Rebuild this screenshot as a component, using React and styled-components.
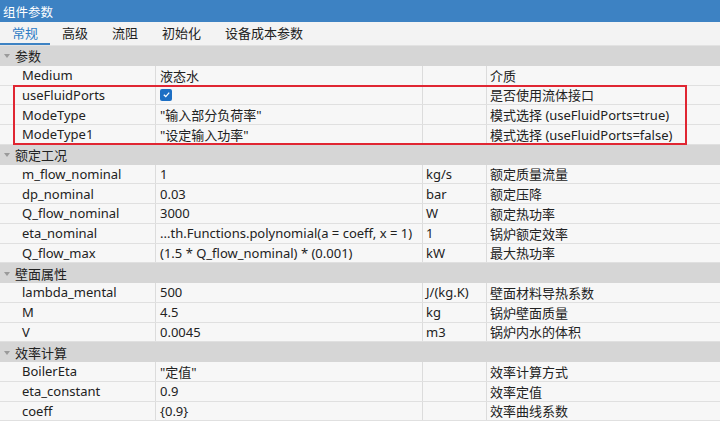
import React from 'react'
import styled, { createGlobalStyle } from 'styled-components'

const GlobalStyle = createGlobalStyle`
  body {
    margin: 0px;
    background: #f7f7f7;
  }
`

const font = `"Noto Sans", "Noto Sans CJK SC", sans-serif`

const Panel = styled.div`
  width: 720px;
  height: 421px;
  overflow: hidden;
  background: #f7f7f7;
  font-family: ${font};
  font-size: 13px;
  color: #222;
`

const TitleBar = styled.div`
  height: 22px;
  background: #3d82c3;
  color: #fff;
  display: flex;
  align-items: center;
  padding-left: 3px;
  font-size: 12.5px;
`

const TabBar = styled.div`
  height: 23px;
  background: #f3f3f3;
  display: flex;
  align-items: stretch;
  border-bottom: 1px solid #e2e2e2;
`

const Tab = styled.div`
  padding: 0 12px;
  display: flex;
  align-items: center;
  font-size: 13px;
  color: ${p => (p.$active ? '#2d7bc5' : '#222')};
  border-bottom: 2px solid ${p => (p.$active ? '#3d82c3' : 'transparent')};
  box-sizing: border-box;
  ${p => p.$active && 'width: 50px; justify-content: center;'}
`

const Row = styled.div`
  display: grid;
  grid-template-columns: 156px 267px 64px 1fr;
  height: 19.75px;
  box-sizing: border-box;
  border-bottom: 1px solid #e0e0e0;
  background: #f7f7f7;
`

const Cell = styled.div`
  display: flex;
  align-items: center;
  padding-left: ${p => p.$pad || 3}px;
  white-space: nowrap;
  overflow: hidden;
  border-right: ${p => (p.$last ? 'none' : '1px solid #dcdcdc')};
`

const GroupHeader = styled.div`
  height: 19.75px;
  box-sizing: border-box;
  background: #d6d6d6;
  display: flex;
  align-items: center;
  padding-left: 4px;
  gap: 5px;
`

const Caret = styled.span`
  width: 0;
  height: 0;
  border-left: 3px solid transparent;
  border-right: 3px solid transparent;
  border-top: 4px solid #9a9a9a;
  margin-top: 1px;
`

const Highlight = styled.div`
  position: relative;
`

const RedBox = styled.div`
  position: absolute;
  left: 13px;
  width: 674px;
  top: -1px;
  bottom: 0px;
  border: 2px solid #e02632;
  box-sizing: border-box;
  pointer-events: none;
`

const Check = styled.span`
  width: 12px;
  height: 12px;
  border-radius: 2px;
  background: #1d6fc4;
  display: inline-flex;
  align-items: center;
  justify-content: center;
`

const groups = [
  {
    title: '参数',
    rows: [
      ['Medium', '液态水', '', '介质'],
    ],
    marked: [
      ['useFluidPorts', 'check', '', '是否使用流体接口'],
      ['ModeType', '"输入部分负荷率"', '', '模式选择 (useFluidPorts=true)'],
      ['ModeType1', '"设定输入功率"', '', '模式选择 (useFluidPorts=false)'],
    ],
  },
  {
    title: '额定工况',
    rows: [
      ['m_flow_nominal', '1', 'kg/s', '额定质量流量'],
      ['dp_nominal', '0.03', 'bar', '额定压降'],
      ['Q_flow_nominal', '3000', 'W', '额定热功率'],
      ['eta_nominal', '...th.Functions.polynomial(a = coeff, x = 1)', '1', '锅炉额定效率'],
      ['Q_flow_max', '(1.5 * Q_flow_nominal) * (0.001)', 'kW', '最大热功率'],
    ],
  },
  {
    title: '壁面属性',
    rows: [
      ['lambda_mental', '500', 'J/(kg.K)', '壁面材料导热系数'],
      ['M', '4.5', 'kg', '锅炉壁面质量'],
      ['V', '0.0045', 'm3', '锅炉内水的体积'],
    ],
  },
  {
    title: '效率计算',
    rows: [
      ['BoilerEta', '"定值"', '', '效率计算方式'],
      ['eta_constant', '0.9', '', '效率定值'],
      ['coeff', '{0.9}', '', '效率曲线系数'],
    ],
  },
]

function ParamRow({ r }) {
  return (
    <Row>
      <Cell $pad={22}>{r[0]}</Cell>
      <Cell $pad={4}>
        {r[1] === 'check' ? (
          <Check>
            <svg width="9" height="9" viewBox="0 0 10 10">
              <path d="M2 5.2 L4.2 7.3 L8 3" stroke="#fff" strokeWidth="1.4" fill="none" />
            </svg>
          </Check>
        ) : (
          r[1]
        )}
      </Cell>
      <Cell $pad={3}>{r[2]}</Cell>
      <Cell $pad={3} $last>{r[3]}</Cell>
    </Row>
  )
}

export default function App() {
  const tabs = ['常规', '高级', '流阻', '初始化', '设备成本参数']
  return (
    <>
      <GlobalStyle />
      <Panel>
        <TitleBar>组件参数</TitleBar>
        <TabBar>
          {tabs.map((t, i) => (
            <Tab key={t} $active={i === 0}>{t}</Tab>
          ))}
        </TabBar>
        {groups.map(g => (
          <div key={g.title}>
            <GroupHeader>
              <Caret />
              {g.title}
            </GroupHeader>
            {g.rows.map(r => (
              <ParamRow key={r[0]} r={r} />
            ))}
            {g.marked && (
              <Highlight>
                {g.marked.map(r => (
                  <ParamRow key={r[0]} r={r} />
                ))}
                <RedBox />
              </Highlight>
            )}
          </div>
        ))}
      </Panel>
    </>
  )
}
